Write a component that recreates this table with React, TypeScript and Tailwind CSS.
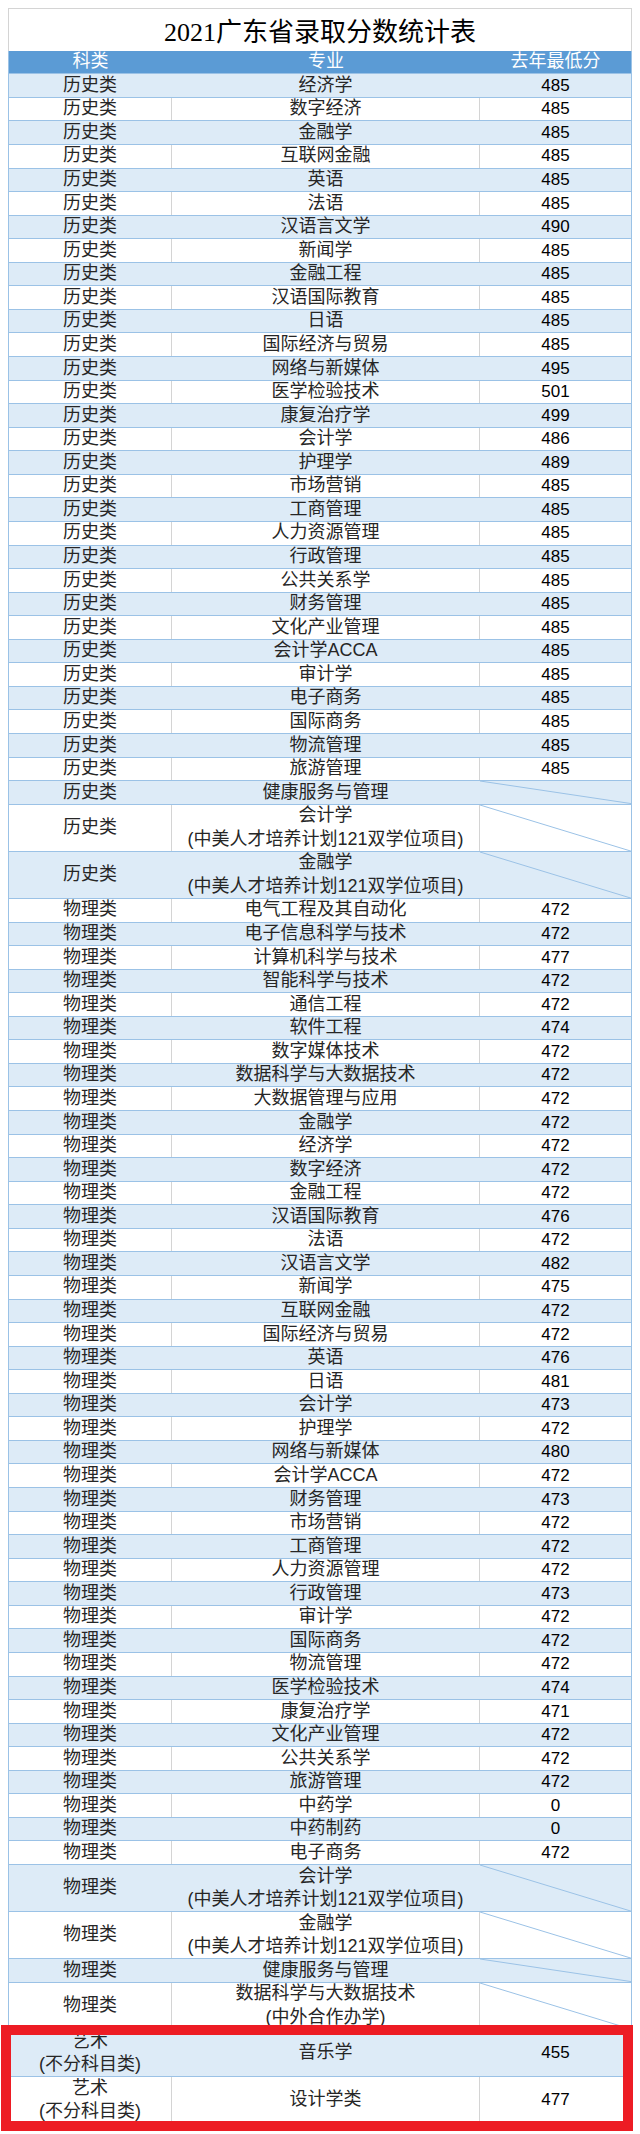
import React from 'react';

type Row = { kind: string[]; major: string[]; score: number | null };

const one = (kind: string, major: string, score: number | null): Row => ({ kind: [kind], major: [major], score });

const history: [string, number][] = [
  ['经济学', 485], ['数字经济', 485], ['金融学', 485], ['互联网金融', 485], ['英语', 485],
  ['法语', 485], ['汉语言文学', 490], ['新闻学', 485], ['金融工程', 485], ['汉语国际教育', 485],
  ['日语', 485], ['国际经济与贸易', 485], ['网络与新媒体', 495], ['医学检验技术', 501], ['康复治疗学', 499],
  ['会计学', 486], ['护理学', 489], ['市场营销', 485], ['工商管理', 485], ['人力资源管理', 485],
  ['行政管理', 485], ['公共关系学', 485], ['财务管理', 485], ['文化产业管理', 485], ['会计学ACCA', 485],
  ['审计学', 485], ['电子商务', 485], ['国际商务', 485], ['物流管理', 485], ['旅游管理', 485],
];

const physics: [string, number][] = [
  ['电气工程及其自动化', 472], ['电子信息科学与技术', 472], ['计算机科学与技术', 477], ['智能科学与技术', 472],
  ['通信工程', 472], ['软件工程', 474], ['数字媒体技术', 472], ['数据科学与大数据技术', 472],
  ['大数据管理与应用', 472], ['金融学', 472], ['经济学', 472], ['数字经济', 472], ['金融工程', 472],
  ['汉语国际教育', 476], ['法语', 472], ['汉语言文学', 482], ['新闻学', 475], ['互联网金融', 472],
  ['国际经济与贸易', 472], ['英语', 476], ['日语', 481], ['会计学', 473], ['护理学', 472],
  ['网络与新媒体', 480], ['会计学ACCA', 472], ['财务管理', 473], ['市场营销', 472], ['工商管理', 472],
  ['人力资源管理', 472], ['行政管理', 473], ['审计学', 472], ['国际商务', 472], ['物流管理', 472],
  ['医学检验技术', 474], ['康复治疗学', 471], ['文化产业管理', 472], ['公共关系学', 472], ['旅游管理', 472],
  ['中药学', 0], ['中药制药', 0], ['电子商务', 472],
];

const plan = '(中美人才培养计划121双学位项目)';

const rows: Row[] = [
  ...history.map(([m, s]) => one('历史类', m, s)),
  one('历史类', '健康服务与管理', null),
  { kind: ['历史类'], major: ['会计学', plan], score: null },
  { kind: ['历史类'], major: ['金融学', plan], score: null },
  ...physics.map(([m, s]) => one('物理类', m, s)),
  { kind: ['物理类'], major: ['会计学', plan], score: null },
  { kind: ['物理类'], major: ['金融学', plan], score: null },
  one('物理类', '健康服务与管理', null),
  { kind: ['物理类'], major: ['数据科学与大数据技术', '(中外合作办学)'], score: null },
  { kind: ['艺术', '(不分科目类)'], major: ['音乐学'], score: 455 },
  { kind: ['艺术', '(不分科目类)'], major: ['设计学类'], score: 477 },
];

const font = { fontFamily: '"Liberation Sans", "Noto Sans CJK SC", sans-serif' };

function Lines({ lines }: { lines: string[] }) {
  return (
    <div className="flex flex-col items-center text-[18px] leading-[23.5px] text-[#262626]">
      {lines.map((l, i) => (
        <span key={i} className="whitespace-nowrap">{l}</span>
      ))}
    </div>
  );
}

function TableRow({ row, band }: { row: Row; band: boolean }) {
  const tall = row.kind.length > 1 || row.major.length > 1;
  const sep = band ? 'border-r border-[#ddebf7]' : 'border-r border-[#d4d4d4]';
  return (
    <div
      className={`flex border-b border-[#9bc2e6] ${tall ? 'h-[47.14px]' : 'h-[23.57px]'} ${
        band ? 'bg-[#ddebf7]' : 'bg-white'
      }`}
    >
      <div className={`w-[163px] shrink-0 flex items-center justify-center ${sep}`}>
        <Lines lines={row.kind} />
      </div>
      <div className={`w-[308px] shrink-0 flex items-center justify-center ${sep}`}>
        <Lines lines={row.major} />
      </div>
      <div className="relative flex-1 flex items-center justify-center">
        {row.score === null ? (
          <svg className="absolute inset-0 w-full h-full" viewBox="0 0 100 100" preserveAspectRatio="none">
            <line x1="0" y1="0" x2="100" y2="100" stroke="#9bc2e6" strokeWidth="1" vectorEffect="non-scaling-stroke" />
          </svg>
        ) : (
          <span className="text-[17px] text-black">{row.score}</span>
        )}
      </div>
    </div>
  );
}

export default function App() {
  return (
    <div className="relative w-[640px] h-[2134px] overflow-hidden bg-white" style={font}>
      <div className="ml-[8px] mt-[8px] w-[624px]">
        {/* title */}
        <div
          className="h-[42.7px] flex items-center justify-center pt-[5px] border-t border-x border-[#d4d4d4] text-[26px] text-black"
          style={{ fontFamily: '"Liberation Serif", "Noto Sans CJK SC", serif' }}
        >
          2021广东省录取分数统计表
        </div>

        <div className="border-x border-[#9bc2e6]">
          {/* header */}
          <div className="flex h-[23.57px] bg-[#5b9bd5] text-white text-[18px] border-b border-[#9bc2e6]">
            <div className="w-[163px] shrink-0 flex items-center justify-center">科类</div>
            <div className="w-[308px] shrink-0 flex items-center justify-center">专业</div>
            <div className="flex-1 flex items-center justify-center">去年最低分</div>
          </div>

          {rows.map((r, i) => (
            <TableRow key={i} row={r} band={i % 2 === 0} />
          ))}
        </div>
      </div>

      {/* annotation box */}
      <div className="absolute left-[1px] top-[2025px] w-[632px] h-[106px] border-[10px] border-[#ed1c24]" />
    </div>
  );
}
